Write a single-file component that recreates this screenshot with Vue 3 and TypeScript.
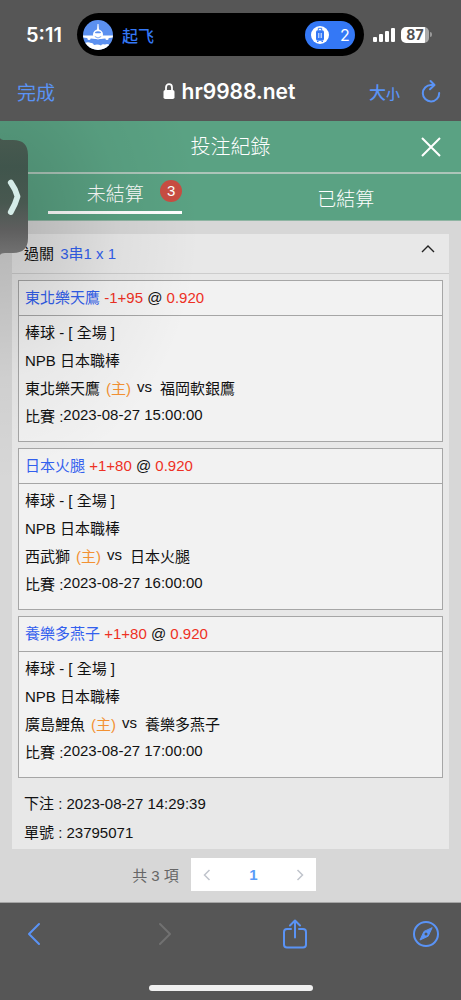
<script setup lang="ts">
import { ref } from 'vue'

interface Leg {
  pick: string
  line: string
  odds: string
  home: string
  away: string
  time: string
}

const legs: Leg[] = [
  { pick: '東北樂天鷹', line: '-1+95', odds: '0.920', home: '東北樂天鷹', away: '福岡軟銀鷹', time: '2023-08-27 15:00:00' },
  { pick: '日本火腿', line: '+1+80', odds: '0.920', home: '西武獅', away: '日本火腿', time: '2023-08-27 16:00:00' },
  { pick: '養樂多燕子', line: '+1+80', odds: '0.920', home: '廣島鯉魚', away: '養樂多燕子', time: '2023-08-27 17:00:00' },
]

const tab = ref<'open' | 'settled'>('open')
const expanded = ref(true)
</script>

<template>
  <div class="screen">
    <header class="chrome">
      <div class="status">
        <span class="clock">5:11</span>
        <div class="island">
          <svg class="plane" width="30" height="30" viewBox="0 0 30 30" aria-hidden="true">
            <defs><clipPath id="disc"><circle cx="15" cy="15" r="15" /></clipPath></defs>
            <g clip-path="url(#disc)">
              <rect width="30" height="30" fill="#5b90f0" />
              <path d="M14.500 4h1l.5 6h-2zM0 15.600h30v1.800l-6 .8-6 .8h-6l-6-.8-6-.8z" fill="#fff" />
              <circle cx="15" cy="14.500" r="5" fill="#fff" />
              <path d="M11.800 12.200q3.200-2 6.400 0l-.8 1h-4.800z" fill="#5b90f0" />
              <path d="M11.800 16.500q3.200 3 6.400 0" fill="none" stroke="#5b90f0" stroke-width="0.800" />
              <circle cx="6" cy="18.500" r="1.600" fill="#fff" /><circle cx="24" cy="18.500" r="1.600" fill="#fff" />
              <path d="M2 23q3-1.500 6 0 2-.5 3 2 4-1 7 .5 1-2 4-1 2-1 4 0v6H0z" fill="#fff" />
            </g>
          </svg>
          <span class="activity">起飞</span>
          <span class="pill">
            <svg width="18" height="18" viewBox="0 0 18 18" aria-hidden="true">
              <circle cx="9" cy="9" r="9" fill="#fff" />
              <path d="M7.300 4.500V2.300h3.400v2.200" fill="none" stroke="#3478f6" />
              <rect x="5" y="4.200" width="8" height="10.500" rx="1.800" fill="#3478f6" />
              <path d="M7.800 7v5M10.200 7v5" stroke="#fff" stroke-width="0.900" />
              <path d="M6 15.500h1.500M10.500 15.500H12" stroke="#3478f6" />
            </svg>
            <span>2</span>
          </span>
        </div>
        <div class="signals">
          <svg width="22" height="14" viewBox="0 0 22 14" fill="#fff" aria-hidden="true">
            <rect x="0" y="9" width="4" height="5" rx="1" /><rect x="6" y="6" width="4" height="8" rx="1" />
            <rect x="12" y="3" width="4" height="11" rx="1" /><rect x="18" y="0" width="4" height="14" rx="1" />
          </svg>
          <span class="battery">87</span>
        </div>
      </div>
      <div class="address">
        <button class="link done">完成</button>
        <div class="site">
          <svg width="12" height="16" viewBox="0 0 12 16" aria-hidden="true">
            <path d="M3 8V4.500a3 3.300 0 0 1 6 0V8" fill="none" stroke="#fff" stroke-width="1.800" />
            <rect x="0.500" y="7" width="11" height="9" rx="1.800" fill="#fff" />
          </svg>
          <span>hr9988.net</span>
        </div>
        <div class="tools">
          <button class="link size">大<small>小</small></button>
          <button class="link" aria-label="重新載入">
            <svg width="20" height="24" viewBox="0 0 20 24" fill="none" stroke="#5a93f5" stroke-width="2" stroke-linecap="round" stroke-linejoin="round">
              <path d="M13 6H10A8.200 8.200 0 1 0 18.200 14M9.500 2L13.500 6l-4.500 4.200" />
            </svg>
          </button>
        </div>
      </div>
    </header>

    <main class="page">
      <div class="title">
        <h1>投注紀錄</h1>
        <button aria-label="關閉">
          <svg width="20" height="20" viewBox="0 0 20 20"><path d="M1 1l18 18M19 1L1 19" stroke="#fff" stroke-width="2" /></svg>
        </button>
      </div>
      <nav class="tabs">
        <button :class="{ active: tab === 'open' }" @click="tab = 'open'">未結算<span class="badge">3</span></button>
        <button :class="{ active: tab === 'settled' }" @click="tab = 'settled'">已結算</button>
      </nav>

      <section class="panel">
        <button class="summary" :aria-expanded="expanded" @click="expanded = !expanded">
          <span>過關 <span class="blue">3串1 x 1</span></span>
          <svg width="14" height="8" viewBox="0 0 14 8"><path d="M1 7l6-6 6 6" fill="none" stroke="#222" stroke-width="1.400" /></svg>
        </button>
        <div v-if="expanded" class="legs">
          <article v-for="leg in legs" :key="leg.time" class="leg">
            <h2><span class="blue">{{ leg.pick }}</span> <span class="red">{{ leg.line }}</span> @ <span class="red">{{ leg.odds }}</span></h2>
            <div class="details">
              <p>棒球 - [ 全場 ]</p>
              <p>NPB 日本職棒</p>
              <p class="match">
                <span>{{ leg.home }}</span><span class="host">(主)</span><span class="raised">vs</span><span class="away">{{ leg.away }}</span>
              </p>
              <p>比賽 :<time class="raised">{{ leg.time }}</time></p>
            </div>
          </article>
        </div>
        <div class="receipt">
          <p>下注 : 2023-08-27 14:29:39</p>
          <p>單號 : 23795071</p>
        </div>
      </section>

      <div class="paging">
        <span>共 3 項</span>
        <div class="pager">
          <button aria-label="上一頁" disabled>
            <svg width="8" height="12" viewBox="0 0 8 12"><path d="M6.500 1l-5 5 5 5" fill="none" stroke="#c0c4cc" stroke-width="1.500" /></svg>
          </button>
          <button class="current">1</button>
          <button aria-label="下一頁" disabled>
            <svg width="8" height="12" viewBox="0 0 8 12"><path d="M1.500 1l5 5-5 5" fill="none" stroke="#c0c4cc" stroke-width="1.500" /></svg>
          </button>
        </div>
      </div>

      <div class="shade"></div>
      <button class="drawer" aria-label="展開">
        <svg width="28" height="117" viewBox="0 0 28 117">
          <defs>
            <linearGradient id="glass" x1="0" y1="0" x2="0" y2="1">
              <stop offset="0" stop-color="#47594f" /><stop offset="0.250" stop-color="#40554c" />
              <stop offset="0.550" stop-color="#485850" /><stop offset="0.780" stop-color="#5e5e5e" /><stop offset="1" stop-color="#727272" />
            </linearGradient>
          </defs>
          <path d="M0 0q1 2 5 2h8q15 0 15 15v83q0 15-15 15H5q-4 0-5 2z" fill="url(#glass)" />
          <path d="M10.800 44.500Q15.500 51 17.500 58.500 15.500 66 10.800 74" fill="none" stroke="#d5ece8" stroke-width="5.800" stroke-linecap="round" stroke-linejoin="round" />
        </svg>
      </button>
    </main>

    <footer class="toolbar">
      <div class="actions">
        <button aria-label="返回">
          <svg width="14" height="24" viewBox="0 0 14 24"><path d="M12 2L2 12l10 10" /></svg>
        </button>
        <button aria-label="前進" disabled>
          <svg class="dim" width="14" height="24" viewBox="0 0 14 24"><path d="M2 2l10 10L2 22" /></svg>
        </button>
        <button aria-label="分享">
          <svg width="24" height="30" viewBox="0 0 24 30">
            <path d="M8 10H4q-3 0-3 3v12.500q0 3 3 3h16q3 0 3-3V13q0-3-3-3h-4M12 18.500V2M7 6.500L12 1.500l5 5" />
          </svg>
        </button>
        <button aria-label="在瀏覽器中開啟">
          <svg width="26" height="26" viewBox="0 0 26 26">
            <circle cx="13" cy="13" r="12" />
            <path d="M19 7l-3.800 8.200L7 19l3.800-8.200z" fill="#5a93f5" stroke-width="1" />
            <circle cx="13" cy="13" r="1.500" fill="#565656" stroke="none" />
          </svg>
        </button>
      </div>
      <div class="home-bar"></div>
    </footer>
  </div>
</template>

<style>
body {
  margin: 0;
  background: #565656;
}
</style>

<style scoped>
.screen {
  display: flex;
  flex-direction: column;
  min-height: 100vh;
  background: #565656;
  color: #111;
  font: 15px "Liberation Sans", "Noto Sans CJK TC", sans-serif;
}
* {
  box-sizing: border-box;
}
h1, h2, p {
  margin: 0;
  font-weight: 400;
}
button {
  border: 0;
  padding: 0;
  background: none;
  color: inherit;
  font: inherit;
}
svg {
  display: block;
  flex: none;
}
.chrome {
  height: 121px;
  background: #565656;
}
.status {
  display: grid;
  grid-template-columns: 77px 1fr 97px;
  align-items: center;
  padding-top: 13px;
  font-family: Inter, "Noto Sans CJK SC", sans-serif;
  color: #fff;
}
.clock {
  padding-left: 26px;
  font-size: 20px;
  font-weight: 600;
}
.island {
  display: flex;
  align-items: center;
  height: 43px;
  padding: 0 9px 0 6px;
  border-radius: 22px;
  background: #000;
}
.activity {
  margin-left: 9px;
  color: #3478f6;
  font-size: 16px;
  font-weight: 500;
}
.pill {
  display: flex;
  align-items: center;
  gap: 11px;
  width: 50px;
  height: 28px;
  margin-left: auto;
  padding-left: 6px;
  border-radius: 14px;
  background: #3478f6;
  font-size: 16px;
}
.signals {
  display: flex;
  align-items: center;
  gap: 6px;
  padding-left: 9px;
}
.battery {
  position: relative;
  width: 28px;
  height: 16px;
  border-radius: 5px;
  background: linear-gradient(90deg, #fff 87%, #aaa 87%);
  color: #505050;
  font-size: 14px;
  font-weight: 700;
  line-height: 16px;
  text-align: center;
}
.battery::after {
  content: "";
  position: absolute;
  top: 5px;
  right: -3px;
  width: 2px;
  height: 5px;
  border-radius: 0 2px 2px 0;
  background: #999;
}
.address {
  display: grid;
  grid-template-columns: 1fr auto 1fr;
  align-items: center;
  height: 52px;
  margin-top: 9px;
  padding: 0 20px 0 17px;
}
.link {
  color: #5a93f5;
}
.done {
  justify-self: start;
  font-size: 19px;
}
.site {
  display: flex;
  align-items: center;
  gap: 7px;
  color: #fff;
  font: 600 21px Inter, sans-serif;
}
.tools {
  display: flex;
  align-items: center;
  justify-content: flex-end;
  gap: 21px;
}
.size {
  font-size: 17px;
  font-weight: 500;
}
.size small {
  font-size: 14px;
}
.page {
  position: relative;
  flex: 1;
  background: #d7d7d7;
  border-bottom: 1px solid #a5a5a5;
}
.title {
  display: grid;
  grid-template-columns: 1fr auto 1fr;
  align-items: center;
  height: 53px;
  padding: 0 20px;
  border-bottom: 2px solid #acc5b9;
  background: #5aa283;
  color: #fff;
}
.title h1 {
  grid-column: 2;
  font-size: 20px;
  font-weight: 300;
  line-height: 28px;
}
.title button {
  justify-self: end;
}
.tabs {
  display: grid;
  grid-template-columns: 1fr 1fr;
  height: 47px;
  border-bottom: 1px solid #8fb5a3;
  background: #5aa283;
  color: #fff;
}
.tabs button {
  position: relative;
  font-size: 19px;
  font-weight: 300;
}
.tabs .active {
  justify-self: center;
  width: 134px;
  height: 40px;
  border-bottom: 3px solid #fff;
}
.badge {
  position: absolute;
  top: 6px;
  right: 0;
  width: 22px;
  height: 22px;
  border-radius: 50%;
  background: #c94d42;
  font-size: 15px;
  line-height: 22px;
}
.panel {
  margin: 13px 12px 0;
  padding-bottom: 2px;
  background: #e8e8e8;
}
.summary {
  display: flex;
  align-items: center;
  justify-content: space-between;
  width: 100%;
  height: 40px;
  padding: 0 14px 3px 12px;
  border-bottom: 1px solid #cdcdcd;
}
.summary .blue {
  margin-left: 2px;
}
.summary svg {
  margin-bottom: 7px;
}
.legs {
  display: grid;
  gap: 6px;
  padding: 6px;
  background: #e8e8e8;
}
.leg {
  border: 1px solid #a6a6a6;
  background: #f2f2f2;
}
.leg h2 {
  height: 35px;
  padding: 0 6px;
  border-bottom: 1px solid #a6a6a6;
  font-size: 15px;
  line-height: 34px;
}
.details {
  padding: 3px 6px 10px;
}
.details p {
  height: 28px;
  line-height: 28px;
}
.match span + span {
  margin-left: 6px;
}
.match .away {
  margin-left: 8px;
}
.raised {
  vertical-align: 2px;
  line-height: 1;
}
.blue {
  color: #3260ee;
}
.red {
  color: #ee3024;
}
.match .host {
  color: #f39132;
}
.receipt {
  padding: 5px 12px 0;
}
.receipt p {
  height: 29px;
  line-height: 29px;
}
.paging {
  display: flex;
  align-items: center;
  justify-content: center;
  gap: 12px;
  padding: 9px 13px 10px 0;
  color: #666;
}
.pager {
  display: grid;
  grid-template-columns: 32px 61px 32px;
  height: 33px;
  background: #fff;
}
.pager button {
  display: grid;
  place-items: center;
}
.pager .current {
  color: #5a9cf8;
  font-weight: 700;
}
.shade {
  position: absolute;
  top: 0;
  left: 0;
  width: 240px;
  height: 360px;
  background: radial-gradient(ellipse 200px 260px at 0 100px, rgba(0, 0, 0, 0.17), rgba(0, 0, 0, 0.04) 60%, transparent);
  pointer-events: none;
}
.drawer {
  position: absolute;
  top: 17px;
  left: 0;
}
.toolbar {
  height: 97px;
  background: #565656;
}
.actions {
  display: flex;
  align-items: center;
  justify-content: space-between;
  height: 62px;
  padding: 0 20px 0 19px;
}
.actions button {
  display: grid;
  place-items: center;
  width: 30px;
  height: 30px;
}
.actions svg {
  fill: none;
  stroke: #5a93f5;
  stroke-width: 2;
  stroke-linecap: round;
  stroke-linejoin: round;
}
.actions .dim {
  stroke: #717171;
}
.home-bar {
  width: 164px;
  height: 6px;
  margin: 20px auto 0;
  border-radius: 3px;
  background: #f0f0f0;
}
</style>
